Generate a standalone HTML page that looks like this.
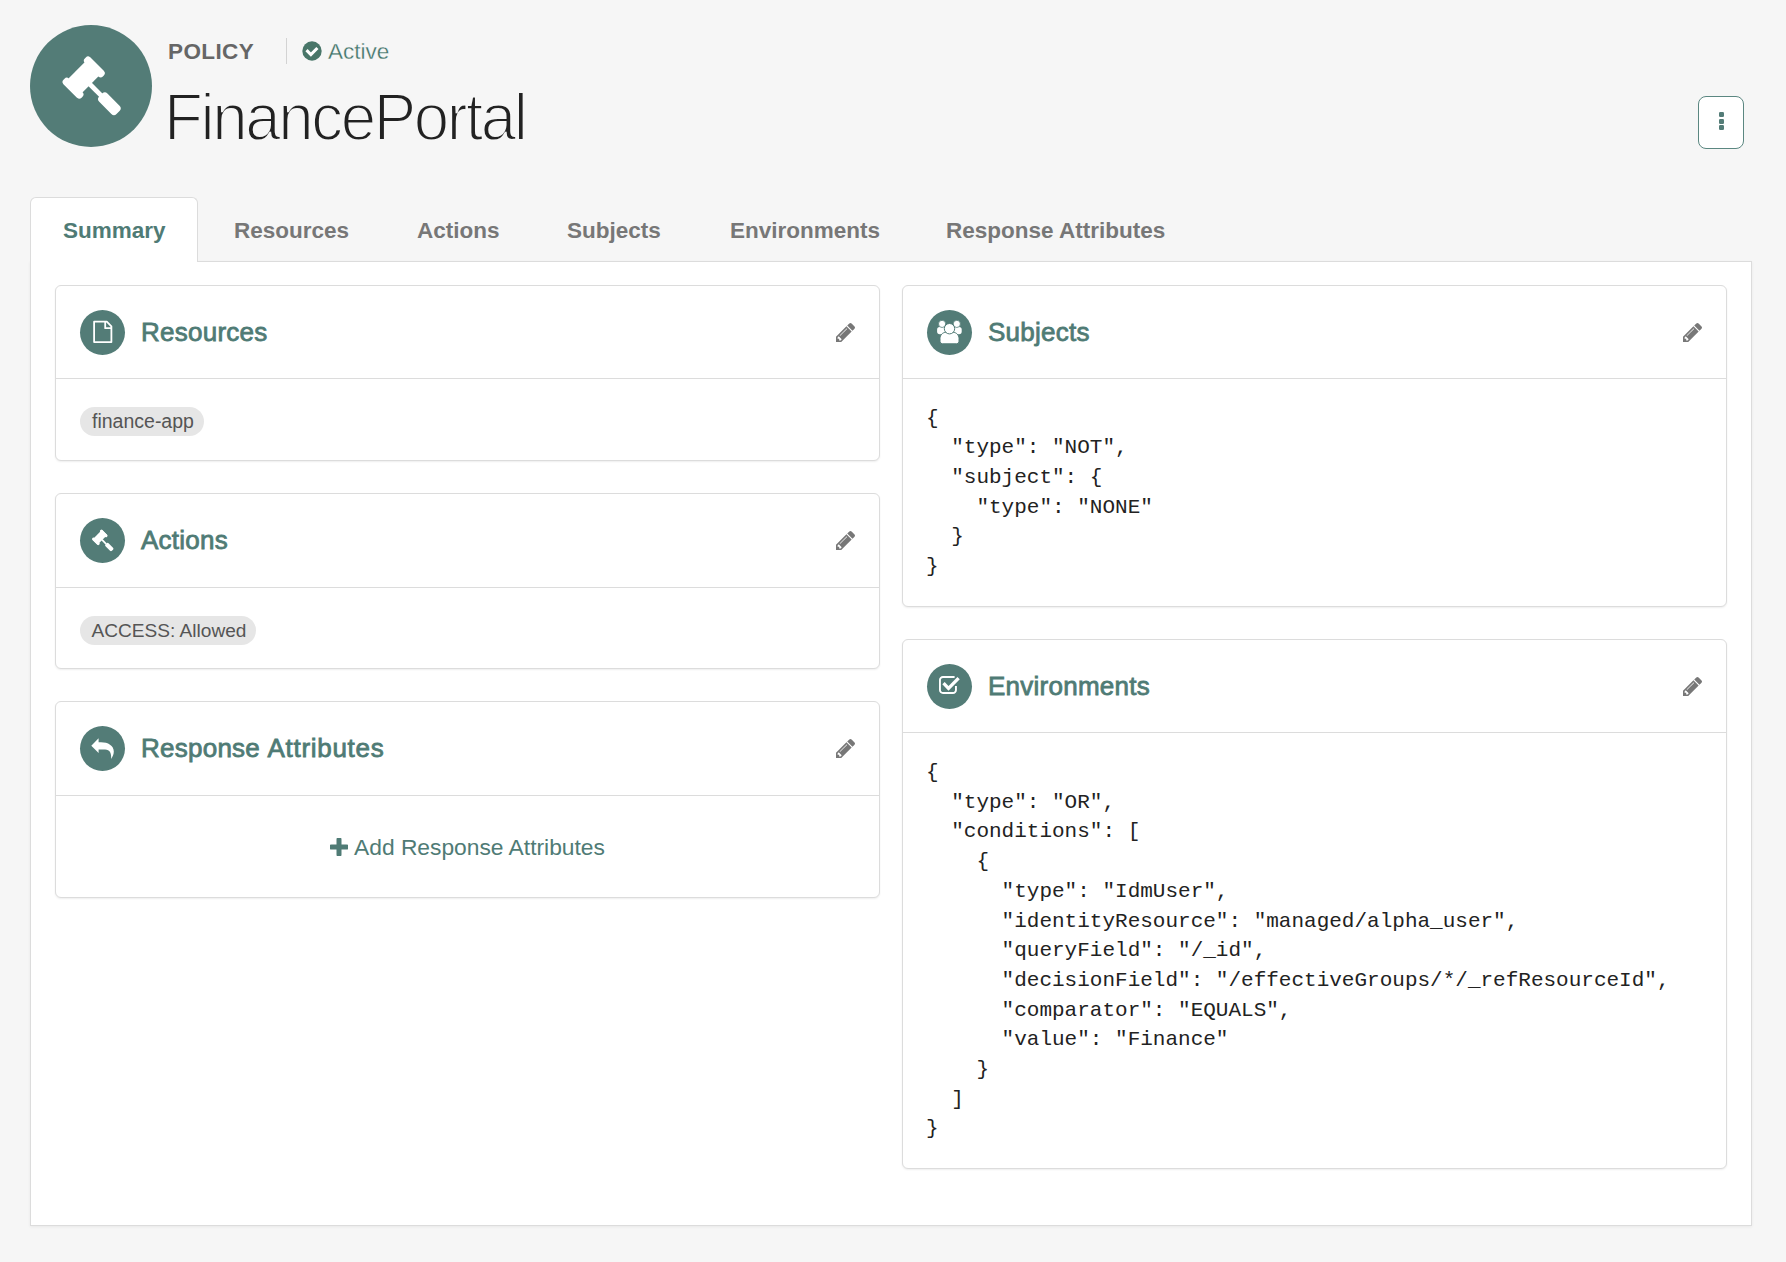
<!DOCTYPE html>
<html><head><meta charset="utf-8">
<style>
html,body{margin:0;padding:0;}
body{width:1786px;height:1262px;background:#f6f6f6;position:relative;overflow:hidden;font-family:"Liberation Sans",sans-serif;}
.abs{position:absolute;}
.avatar{left:30px;top:25px;width:122px;height:122px;border-radius:50%;background:#537c77;}
.avatar svg{position:absolute;left:0;top:0;}
.kind{left:168px;top:39px;font-size:22.5px;line-height:26px;font-weight:700;color:#666;letter-spacing:0.4px;white-space:nowrap;}
.sep{left:286px;top:38px;width:1px;height:26px;background:#d3d3d3;}
.status{left:328px;top:39px;font-size:22.5px;line-height:26px;color:#3f7268;-webkit-text-stroke:0.3px #f6f6f6;white-space:nowrap;}
.chk{left:302px;top:41px;width:20px;height:20px;}
.title{left:164px;top:81.5px;font-size:66px;line-height:70px;letter-spacing:-2.5px;color:#222;-webkit-text-stroke:2px #f6f6f6;white-space:nowrap;transform-origin:0 0;transform:scaleX(0.965);}
.kebab{left:1698px;top:96px;width:44px;height:51px;border:1px solid #5b8781;border-radius:8px;background:#fff;}
.kebab i{position:absolute;left:19.5px;width:5px;height:5px;border-radius:1.2px;background:#537c77;}
.tabs .tab{position:absolute;top:218px;font-size:22.5px;line-height:26px;font-weight:700;color:#777;white-space:nowrap;}
.activetab{left:30px;top:197px;width:166px;height:64px;background:#fff;border:1px solid #dcdcdc;border-bottom:none;border-radius:6px 6px 0 0;}
.panel{left:30px;top:261px;width:1720px;height:963px;background:#fff;border:1px solid #dcdcdc;box-shadow:0 1px 3px rgba(0,0,0,0.06);}
.card{position:absolute;background:#fff;border:1px solid #dcdcdc;border-radius:6px;box-shadow:0 1px 2px rgba(0,0,0,0.07);box-sizing:border-box;}
.card .hd{position:absolute;left:0;right:0;top:0;height:93px;border-bottom:1px solid #dcdcdc;box-sizing:border-box;}
.card .ic{position:absolute;left:24px;top:24px;width:45px;height:45px;border-radius:50%;background:#537c77;}
.card .ic svg{position:absolute;left:0;top:0;}
.card .ct{position:absolute;left:85px;top:31px;font-size:26px;line-height:30px;color:#4f7b75;-webkit-text-stroke:0.8px #4f7b75;letter-spacing:0.25px;white-space:nowrap;}
.card .pen{position:absolute;left:780px;top:37px;width:19px;height:19px;}
.badge{position:absolute;left:24px;height:29px;border-radius:15px;background:#e6e6e6;color:#555;font-size:19.5px;line-height:29px;padding:0 10px 0 12px;white-space:nowrap;}
pre{margin:0;position:absolute;left:23px;font-family:"Liberation Mono",monospace;font-size:21px;line-height:29.7px;color:#222;}
.add{position:absolute;left:274px;top:132px;font-size:22.8px;line-height:26px;color:#4f7b75;white-space:nowrap;}
.add svg{position:absolute;left:0;top:3.5px;}
</style></head>
<body>
<svg width="0" height="0" style="position:absolute">
 <defs>
  <g id="gavel" fill="#fff">
   <g transform="translate(61.4,60.6) scale(1.045) translate(-61.1,-60.3) translate(20,20) rotate(45)">
    <rect x="37.2" y="-18.8" width="18.9" height="36" />
    <rect x="34.7" y="-18.84" width="24.4" height="7.3" rx="3" />
    <rect x="34.7" y="10.0" width="24.4" height="7.3" rx="3" />
    <rect x="55" y="-2.73" width="16" height="4.55" />
    <rect x="70.3" y="-5.98" width="23.4" height="11.05" rx="3.5" />
   </g>
  </g>
  <path id="pencil" transform="translate(0,1387) scale(1,-1)" d="M363 0l91 91l-235 235l-91 -91v-107h128v-128h107zM886 928q0 22 -22 22q-10 0 -17 -7l-542 -542q-7 -7 -7 -17q0 -22 22 -22q10 0 17 7l542 542q7 7 7 17zM832 1120l416 -416l-832 -832h-416v416zM1515 1024q0 -53 -37 -90l-166 -166l-416 416l166 165q36 38 90 38q53 0 91 -38l235 -234q37 -39 37 -91z"/>
 </defs>
</svg>

<div class="abs avatar"><svg width="122" height="122" viewBox="0 0 122 122"><use href="#gavel"/></svg></div>
<div class="abs kind">POLICY</div>
<div class="abs sep"></div>
<svg class="abs chk" viewBox="0 0 20 20"><circle cx="10" cy="10" r="9.7" fill="#497669"/><path d="M4.5,9.2 L8.9,13.5 L15.4,7" fill="none" stroke="#fff" stroke-width="3.1"/></svg>
<div class="abs status">Active</div>
<div class="abs title">FinancePortal</div>
<div class="abs kebab"><i style="top:15px"></i><i style="top:22px"></i><i style="top:28px"></i></div>

<div class="abs panel"></div>
<div class="abs activetab"></div>
<div class="tabs">
<div class="tab" style="left:63px;color:#4f7b75">Summary</div>
<div class="tab" style="left:234px">Resources</div>
<div class="tab" style="left:417px">Actions</div>
<div class="tab" style="left:567px">Subjects</div>
<div class="tab" style="left:730px">Environments</div>
<div class="tab" style="left:946px">Response Attributes</div>
</div>

<div class="card" style="left:55px;top:285px;width:825px;height:176px">
 <div class="hd">
  <div class="ic"><svg width="45" height="45" viewBox="0 0 45 45"><path d="M14.1,11.7 H26.8 L31.4,16.4 V32.1 H14.1 Z" fill="none" stroke="#fff" stroke-width="1.8" stroke-linejoin="round"/><path d="M25.2,11.7 V18.2 H31.4" fill="none" stroke="#fff" stroke-width="1.8" stroke-linejoin="round"/></svg></div>
  <div class="ct">Resources</div>
  <svg class="pen" viewBox="0 0 1515 1515"><use href="#pencil" fill="#777"/></svg>
 </div>
 <div class="badge" style="top:121px">finance-app</div>
</div>
<div class="card" style="left:55px;top:493px;width:825px;height:176px">
 <div class="hd" style="height:94px">
  <div class="ic"><svg width="45" height="45" viewBox="0 0 122 122"><use href="#gavel"/></svg></div>
  <div class="ct">Actions</div>
  <svg class="pen" viewBox="0 0 1515 1515"><use href="#pencil" fill="#777"/></svg>
 </div>
 <div class="badge" style="top:121.5px;font-size:19.1px;padding-left:11.5px">ACCESS: Allowed</div>
</div>
<div class="card" style="left:55px;top:701px;width:825px;height:197px">
 <div class="hd" style="height:94px">
  <div class="ic"><svg width="45" height="45" viewBox="0 0 45 45"><path d="M11.3,19.8 L18.6,12.3 V16.2 H21 C28,16.2 33.8,19.5 33.8,25.5 C33.8,28.5 32.5,31 31.2,32.9 C31.4,27 30,23.4 25,23.4 H18.6 V27.1 Z" fill="#fff"/></svg></div>
  <div class="ct">Response <span style="letter-spacing:0.7px">Attributes</span></div>
  <svg class="pen" viewBox="0 0 1515 1515"><use href="#pencil" fill="#777"/></svg>
 </div>
 <div class="add"><svg width="18" height="18" viewBox="0 0 18 18"><path d="M9,1.5 V16.5 M1.5,9 H16.5" stroke="#4f7b75" stroke-width="5" stroke-linecap="round"/></svg><span style="position:absolute;left:24px;top:0">Add Response Attributes</span></div>
</div>
<div class="card" style="left:902px;top:285px;width:825px;height:322px">
 <div class="hd">
  <div class="ic"><svg width="45" height="45" viewBox="0 0 45 45" fill="#fff">
   <rect x="10.1" y="17.1" width="9" height="7.1" rx="2.6"/><rect x="25.7" y="17.1" width="9" height="7.1" rx="2.6"/>
   <circle cx="15.1" cy="13.9" r="3.6" stroke="#537c77" stroke-width="0.8"/><circle cx="29.8" cy="13.9" r="3.6" stroke="#537c77" stroke-width="0.8"/>
   <path d="M15.5,33.8 H29.5 A2.5,2.5 0 0 0 32,31.3 V28.5 C32,25 29.3,22.3 26,22.3 C24.5,23.3 20.5,23.3 19,22.3 C15.7,22.3 13,25 13,28.5 V31.3 A2.5,2.5 0 0 0 15.5,33.8 Z" stroke="#537c77" stroke-width="1"/>
   <circle cx="22.5" cy="18.7" r="5.2" stroke="#537c77" stroke-width="1"/>
  </svg></div>
  <div class="ct">Subjects</div>
  <svg class="pen" viewBox="0 0 1515 1515"><use href="#pencil" fill="#777"/></svg>
 </div>
 <pre style="top:117.5px">{
  "type": "NOT",
  "subject": {
    "type": "NONE"
  }
}</pre>
</div>
<div class="card" style="left:902px;top:639px;width:825px;height:530px">
 <div class="hd">
  <div class="ic"><svg width="45" height="45" viewBox="0 0 45 45"><path d="M27.6,12.95 H16 A3,3 0 0 0 12.95,16 V26 A3,3 0 0 0 16,29.05 H26 A3,3 0 0 0 28.95,26 V22" fill="none" stroke="#fff" stroke-width="1.9"/><path d="M16.5,19.2 L21.5,24.3 L31.6,14.2" fill="none" stroke="#fff" stroke-width="3.3"/></svg></div>
  <div class="ct">Environments</div>
  <svg class="pen" viewBox="0 0 1515 1515"><use href="#pencil" fill="#777"/></svg>
 </div>
 <pre style="top:118px">{
  "type": "OR",
  "conditions": [
    {
      "type": "IdmUser",
      "identityResource": "managed/alpha_user",
      "queryField": "/_id",
      "decisionField": "/effectiveGroups/*/_refResourceId",
      "comparator": "EQUALS",
      "value": "Finance"
    }
  ]
}</pre>
</div>
</body></html>
